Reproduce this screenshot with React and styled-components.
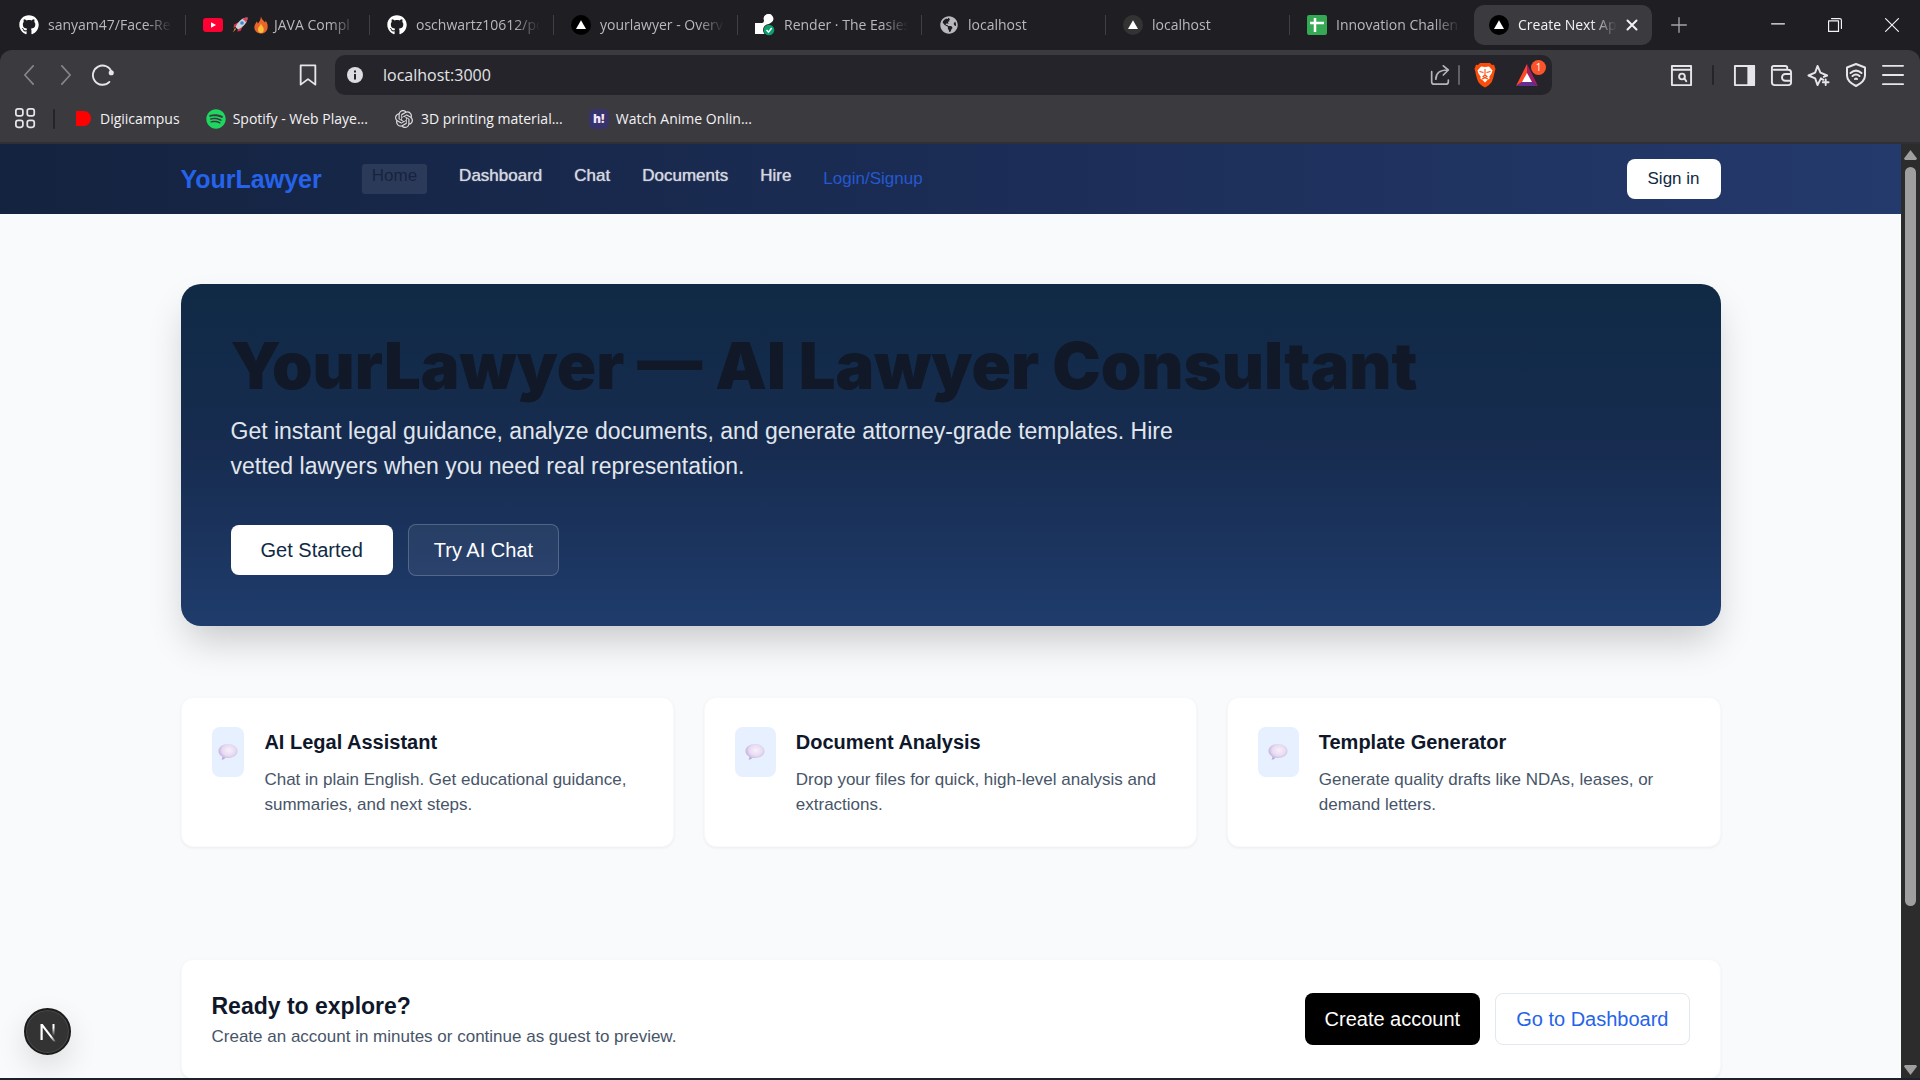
import React, { useState } from 'react';
import styled, { createGlobalStyle, css } from 'styled-components';
import { FaGithub, FaSpotify, FaGlobeAmericas } from 'react-icons/fa';
import { SiOpenai } from 'react-icons/si';

const GlobalStyle = createGlobalStyle`
  * {
    box-sizing: border-box;
  }

  body {
    margin: 0;
    background: #1f1e23;
    font-family: "Liberation Sans", Arial, sans-serif;
  }

  button, input {
    font-family: inherit;
  }

  svg {
    flex: none;
  }
`;

/* ---------- browser window ---------- */

const Window = styled.div`
  display: flex;
  flex-direction: column;
  height: 100vh;
  overflow: hidden;
  border-bottom: 2px solid #1c212b;
`;

const Chrome = styled.header`
  flex: none;
  font-family: "Open Sans", "Noto Sans", sans-serif;
  background: #1f1e23;
`;

const TabStrip = styled.div`
  display: flex;
  align-items: center;
  height: 50px;
  padding-left: 2px;
`;

const Tab = styled.button`
  position: relative;
  flex: 0 1 184px;
  min-width: 0;
  height: 40px;
  display: flex;
  align-items: center;
  gap: 9px;
  padding: 0 14px 0 17px;
  border: none;
  background: transparent;
  color: #b9b9bd;
  font-size: 14px;
  line-height: 20px;
  text-align: left;

  &::after {
    content: '';
    display: ${({ $last }) => ($last ? 'none' : 'block')};
    position: absolute;
    right: 0;
    top: 10px;
    width: 1px;
    height: 20px;
    background: #403f45;
  }

  ${({ $active }) => $active && css`
    flex-basis: 178px;
    padding: 0 14px 0 15px;
    border-radius: 10px;
    background: #3b3a3f;
    color: #f2f2f4;
  `}
`;

const TabTitle = styled.span`
  flex: 1;
  min-width: 0;
  display: flex;
  align-items: center;
  gap: 6px;
  overflow: hidden;
  white-space: nowrap;
  mask-image: linear-gradient(to right, #000 calc(100% - 26px), transparent);
`;

const FixedIcon = styled.span`
  flex: none;
  display: flex;
  align-items: center;
  justify-content: center;
  width: 20px;
  height: 20px;
  color: ${({ $color }) => $color || '#ffffff'};
`;

const NewTab = styled.button`
  display: flex;
  align-items: center;
  justify-content: center;
  width: 40px;
  height: 40px;
  margin: 0 auto 0 7px;
  padding: 0;
  border: none;
  background: transparent;
  color: #a5a5a9;
`;

const WindowButton = styled.button`
  display: flex;
  align-items: center;
  justify-content: center;
  width: 57px;
  height: 50px;
  padding: 0;
  border: none;
  background: transparent;
  color: #f4f4f6;
`;

const Bars = styled.div`
  background: #3b3a3f;
  border-radius: 12px 12px 0 0;
  border-bottom: 2px solid #303034;
`;

const Toolbar = styled.div`
  display: flex;
  align-items: center;
  padding-top: 5px;
`;

const ToolGroup = styled.div`
  flex: none;
  display: flex;
  align-items: center;
  width: ${({ $width }) => $width};
  padding: 0 9px 0 10px;
  justify-content: ${({ $end }) => ($end ? 'flex-end' : 'flex-start')};
`;

const ToolButton = styled.button`
  display: flex;
  align-items: center;
  justify-content: center;
  width: 37px;
  height: 38px;
  padding: 0;
  border: none;
  background: transparent;
  color: ${({ $dim }) => ($dim ? '#85858a' : '#e6e6ea')};
  margin-left: ${({ $push }) => ($push ? 'auto' : '0')};
`;

const Divider = styled.span`
  width: 2px;
  height: 20px;
  margin: 0 ${({ $space }) => $space || '12px'};
  border-radius: 1px;
  background: ${({ $light }) => ($light ? '#606066' : '#252429')};
`;

const AddressBar = styled.div`
  flex: 1;
  display: flex;
  align-items: center;
  height: 40px;
  padding: 0 4px 0 12px;
  border-radius: 10px;
  background: #25242a;
`;

const AddressInput = styled.input`
  flex: 1;
  min-width: 0;
  padding: 0 0 0 20px;
  border: none;
  outline: none;
  background: transparent;
  color: #e4e4e8;
  font-size: 16px;
  line-height: 24px;
`;

const AddressButton = styled.button`
  position: relative;
  display: flex;
  align-items: center;
  justify-content: center;
  width: ${({ $wide }) => ($wide ? '42px' : '28px')};
  height: 40px;
  padding: 0;
  border: none;
  background: transparent;
  color: #b4b4b9;
`;

const Badge = styled.span`
  position: absolute;
  top: 5px;
  right: 2px;
  width: 15px;
  height: 15px;
  border-radius: 8px;
  background: #fb542b;
  color: #fff;
  font-size: 10px;
  line-height: 15px;
  text-align: center;
`;

const Bookmarks = styled.nav`
  display: flex;
  align-items: center;
  gap: 26px;
  height: 47px;
  padding: 0 15px;
`;

const AppsButton = styled.button`
  display: flex;
  align-items: center;
  gap: 17px;
  padding: 0;
  border: none;
  background: transparent;
  color: #e6e6ea;
  margin-right: -8px;
`;

const Bookmark = styled.a`
  display: flex;
  align-items: center;
  gap: 7px;
  color: #f2f2f4;
  font-size: 14px;
  line-height: 20px;
  text-decoration: none;
  white-space: nowrap;
`;

const HTile = styled.span`
  width: 20px;
  height: 20px;
  border-radius: 5px;
  background: #37336b;
  color: #f5e6fa;
  font-size: 12px;
  font-weight: 800;
  line-height: 20px;
  text-align: center;
`;

/* ---------- viewport ---------- */

const Viewport = styled.div`
  flex: 1;
  min-height: 0;
  display: flex;
`;

const Page = styled.div`
  flex: 1;
  min-width: 0;
  overflow: hidden;
  background: #f9fafc;
`;

const Scrollbar = styled.div`
  flex: none;
  width: 19px;
  display: flex;
  flex-direction: column;
  align-items: center;
  padding: 6px 0 3px;
  background: #2c2c2c;
`;

const ScrollTrack = styled.div`
  flex: 1;
  display: flex;
  padding: 7px 0 8px;
`;

const ScrollThumb = styled.div`
  width: 11px;
  height: 83%;
  border-radius: 6px;
  background: #9f9f9f;
`;

const Container = styled.div`
  width: 100%;
  max-width: 1600px;
  margin: 0 auto;
  padding: 0 30px;
`;

const Nav = styled.nav`
  background: linear-gradient(to right, #14233f, #1b2c55 50%, #243a6c);
`;

const NavInner = styled(Container)`
  display: flex;
  align-items: center;
  height: 70px;
`;

const Logo = styled.a`
  margin-right: 40px;
  color: #2563eb;
  font-size: 25px;
  font-weight: 700;
  line-height: 35px;
  text-decoration: none;
`;

const NavLinks = styled.div`
  display: flex;
  align-items: center;
  gap: 32px;
  margin-right: auto;
`;

const NavLink = styled.a`
  height: 30px;
  color: #d3d7df;
  font-size: 17px;
  line-height: 24px;
  text-decoration: none;
  text-shadow: 0 0 1px #d3d7df;

  ${({ $current }) => $current && css`
    padding: 0 10px;
    border-radius: 3px;
    background: #2c3a5a;
    color: #17233f;
    text-shadow: none;
  `}

  ${({ $plain }) => $plain && css`
    line-height: 30px;
    color: #2459cf;
    text-shadow: none;
  `}
`;

const buttonSizes = {
  small: css`
    padding: 8px 21px;
    font-size: 17px;
    line-height: 24px;
  `,
  medium: css`
    padding: 13px 20px;
    font-size: 20px;
    line-height: 26px;
  `,
  large: css`
    padding: 12px 30px;
    font-size: 20px;
    line-height: 26px;
  `,
};

const buttonLooks = {
  white: css`
    background: #ffffff;
    color: #0f2a43;
  `,
  glass: css`
    padding: 12px 25px;
    background: rgba(255, 255, 255, 0.06);
    border: 1px solid rgba(255, 255, 255, 0.2);
    color: #ffffff;
  `,
  black: css`
    background: #000000;
    color: #ffffff;
  `,
  outline: css`
    padding: 12px 20px;
    background: #ffffff;
    border: 1px solid #e2e8f0;
    color: #2563eb;
  `,
};

const Button = styled.button`
  flex: none;
  border: none;
  border-radius: 8px;
  white-space: nowrap;
  ${({ $size }) => buttonSizes[$size]}
  ${({ $look }) => buttonLooks[$look]}
`;

const Main = styled(Container)`
  padding-top: 70px;
`;

const Hero = styled.section`
  padding: 50px;
  border-radius: 20px;
  background: linear-gradient(to bottom, #102a45, #172c50 50%, #1f3c6c);
  box-shadow: 0 20px 38px -6px rgba(0, 0, 0, 0.2);
`;

const HeroTitle = styled.h1`
  margin: 0;
  color: #111827;
  font-family: Inter, "Arial Black", sans-serif;
  font-size: 65px;
  font-weight: 900;
  line-height: 64px;
`;

const HeroText = styled.p`
  max-width: 960px;
  margin: 16px 0 40px;
  color: #e1e6ee;
  font-size: 23px;
  line-height: 35px;
`;

const ButtonRow = styled.div`
  display: flex;
  align-items: center;
  gap: 15px;
`;

const Features = styled.section`
  display: grid;
  grid-template-columns: repeat(3, 1fr);
  gap: 30px;
  margin-top: 71px;
`;

const card = css`
  padding: 29px 30px;
  border: 1px solid #f8f9fb;
  border-radius: 12px;
  background: #ffffff;
  box-shadow: 0 1px 3px rgba(15, 23, 42, 0.06);
`;

const Feature = styled.article`
  ${card}
  display: flex;
  align-items: flex-start;
  gap: 20px;
`;

const FeatureIcon = styled.div`
  display: flex;
  align-items: center;
  justify-content: center;
  width: 50px;
  height: 50px;
  border-radius: 8px;
  background: #e6f0ff;
`;

const FeatureTitle = styled.h3`
  margin: 0 0 10px;
  color: #0f172a;
  font-size: 20px;
  font-weight: 700;
  line-height: 30px;
`;

const Muted = styled.p`
  margin: 0;
  color: #475569;
  font-size: 17px;
  line-height: 25px;
`;

const CallToAction = styled.section`
  ${card}
  display: flex;
  align-items: center;
  justify-content: space-between;
  margin-top: 112px;
`;

const CtaTitle = styled.h2`
  margin: 0;
  color: #0f172a;
  font-size: 23px;
  font-weight: 700;
  line-height: 35px;
`;

const DevBadge = styled.button`
  position: fixed;
  left: 24px;
  bottom: 25px;
  display: flex;
  align-items: center;
  justify-content: center;
  width: 47px;
  height: 47px;
  padding: 0;
  border: 2px solid #1c1c1c;
  border-radius: 50%;
  background: #333333;
  box-shadow: inset 0 0 0 1px #4a4a4a, 0 12px 30px rgba(0, 0, 0, 0.12);
`;

/* ---------- drawings ---------- */

const Stroke = ({ size = 20, width = 2, children }) => (
  <svg width={size} height={size} viewBox="0 0 24 24" fill="none" stroke="currentColor"
    strokeWidth={width} strokeLinecap="round" strokeLinejoin="round">
    {children}
  </svg>
);

const Triangle = ({ fill = '#000' }) => (
  <svg width="20" height="20" viewBox="0 0 20 20">
    <circle cx="10" cy="10" r="10" fill={fill} />
    <path d="M10 5.2 15 14H5z" fill="#fff" />
  </svg>
);

const YouTube = () => (
  <svg width="20" height="20" viewBox="0 0 20 20">
    <rect y="3" width="20" height="14" rx="3" fill="#ff0033" />
    <path d="M8 7.2v5.6l5-2.8z" fill="#fff" />
  </svg>
);

const Rocket = () => (
  <svg width="16" height="16" viewBox="0 0 16 16">
    <path d="M4 12 0.8 15.4 3 11z" fill="#f8a22e" />
    <path d="M6 5.5 2 7.5 1.5 11 6 8.5zM10.5 10 8.5 14 5 14.5 7.5 10z" fill="#d8324c" />
    <path d="M15.5.5C11 .6 6.500 3.500 3.500 10l2.500 2.500C12.500 9.500 15.400 5 15.500.5z" fill="#c9d1dc" />
    <path d="M15.500.5c-1.800 0-3.500.4-5 1.200l3.800 3.800c.8-1.500 1.200-3.200 1.200-5z" fill="#e2405c" />
    <circle cx="10" cy="6" r="1.800" fill="#3d87c9" />
  </svg>
);

const Flame = () => (
  <svg width="14" height="18" viewBox="0 0 14 18">
    <path d="M7 .5c.5 3 3 4 4 6 .5-.6.600-1.200.5-2C13.300 6.700 14 9 13.600 12c-.5 3.500-3.300 5.500-6.600 5.500S.7 15.300.4 12C.1 9 2 7.500 2.500 5.500c.8.600 1.200 1.300 1.400 2C5.500 5.500 6.800 3.500 7 .5z" fill="#e8662a" />
    <path d="M7 7.500c.4 2 2.800 3.200 2.800 6 0 2-1.200 3.500-2.800 3.500s-3-1.500-3-3.500C4 11 6.300 10 7 7.500z" fill="#fbbf3b" />
  </svg>
);

const RenderLogo = () => (
  <svg width="20" height="22" viewBox="0 0 20 22">
    <path d="M0 20V9h6c2 0 3-1 3-2.600A4.800 4.800 0 1 1 16 8.800c-1.200.8-2.500 1-2.500 2.200v9z" fill="#fff" />
    <circle cx="14" cy="16" r="6" fill="#1f1e23" />
    <circle cx="14" cy="16" r="5.300" fill="#0aa06e" />
    <path d="m11.500 16 2 2.200 3.200-4.200" fill="none" stroke="#fff" strokeWidth="1.500" />
  </svg>
);

const Sheets = () => (
  <svg width="20" height="20" viewBox="0 0 20 20">
    <rect width="20" height="20" rx="2" fill="#34a853" />
    <path d="M8 3v14M3 8h14" stroke="#fff" strokeWidth="2.500" fill="none" />
  </svg>
);

const BraveLion = () => (
  <svg width="22" height="26" viewBox="0 0 22 26">
    <path d="M6 1h10l2 2 2-.2L21.500 7l-.8 2.500c-.8 4-1.700 8-3 10.500-1.200 2-4.500 4.500-6.700 5.500-2.200-1-5.500-3.500-6.700-5.500-1.300-2.500-2.200-6.500-3-10.500L.5 7 2 2.800 4 3z" fill="#fb4d0a" />
    <path d="M7 4.500 11 5l4-.5L18.500 8.500l-1 3-2.200 3.300.4 1.700-2.200 1.500L11 20.500 8.500 18l-2.200-1.500.4-1.700-2.200-3.300-1-3z" fill="#fff" />
    <path d="m5.500 9.500 4 1M16.500 9.500l-4 1M11 7v6l-2 1.500 2 1.200 2-1.200-2-1.500M8 17l3-1.300 3 1.300" fill="none" stroke="#fb4d0a" strokeWidth="1.100" />
  </svg>
);

const BatTriangle = () => (
  <svg width="24" height="24" viewBox="0 0 24 24">
    <path d="M12 1 1 23l7-4.500 4-7.500z" fill="#ff4724" />
    <path d="M1 23h22l-6.500-4.500H8z" fill="#662d91" />
    <path d="m12 1 11 22-6.500-4.500L12 11z" fill="#9e1f63" />
    <path d="m12 10 5 9H7z" fill="#fff" />
  </svg>
);

const SpeechBubble = () => (
  <svg width="20" height="20" viewBox="0 0 20 20">
    <defs>
      <radialGradient id="bubble" cx="0.55" cy="0.4" r="0.6">
        <stop offset="0" stopColor="#f7f1fa" />
        <stop offset="0.6" stopColor="#e6daf0" />
        <stop offset="1" stopColor="#bda6dc" />
      </radialGradient>
    </defs>
    <path d="M10 2c5.300 0 9.500 3 9.500 7s-4.200 7-9.500 7c-.9 0-1.700-.1-2.500-.3-.9 1.200-2.200 1.900-4 2.100.7-.9.9-2 .7-3.300C1.900 13.300.5 11.300.5 9c0-4 4.200-7 9.500-7z" fill="url(#bubble)" />
  </svg>
);

const NextMark = () => (
  <svg width="20" height="22" viewBox="0 0 20 22">
    <defs>
      <linearGradient id="stem" x1="0" y1="0" x2="0" y2="1">
        <stop offset="0.3" stopColor="#fff" />
        <stop offset="1" stopColor="#fff" stopOpacity="0" />
      </linearGradient>
      <linearGradient id="slash" x1="0" y1="0" x2="1" y2="1">
        <stop offset="0.7" stopColor="#fff" />
        <stop offset="1" stopColor="#fff" stopOpacity="0.1" />
      </linearGradient>
    </defs>
    <path d="M2.500 19V3h2.200L18 20.500h-2.500L4.700 6.400V19z" fill="url(#slash)" />
    <path d="M14.500 3h2v12h-2z" fill="url(#stem)" />
  </svg>
);

/* ---------- data ---------- */

const tabs = [
  { icon: <FaGithub size={20} />, title: 'sanyam47/Face-Re' },
  { icon: <YouTube />, title: 'JAVA Compl', lead: <><Rocket /><Flame /></> },
  { icon: <FaGithub size={20} />, title: 'oschwartz10612/po' },
  { icon: <Triangle />, title: 'yourlawyer - Overv' },
  { icon: <RenderLogo />, title: 'Render · The Easies' },
  { icon: <FaGlobeAmericas size={18} />, title: 'localhost', color: '#b9b9bd' },
  { icon: <Triangle fill="#333333" />, title: 'localhost' },
  { icon: <Sheets />, title: 'Innovation Challen' },
  { icon: <Triangle />, title: 'Create Next Ap' },
];

const bookmarks = [
  {
    title: 'Digiicampus',
    icon: <svg width="15" height="15" viewBox="0 0 15 15"><path d="M0 0h8a7 7.500 0 0 1 0 15H0z" fill="#ff0000" /></svg>,
  },
  { title: 'Spotify - Web Playe...', icon: <FaSpotify size={20} />, color: '#1ed760' },
  { title: '3D printing material...', icon: <SiOpenai size={18} />, color: '#dcdce0' },
  { title: 'Watch Anime Onlin...', icon: <HTile>h!</HTile> },
];

const features = [
  { title: 'AI Legal Assistant', text: 'Chat in plain English. Get educational guidance, summaries, and next steps.' },
  { title: 'Document Analysis', text: 'Drop your files for quick, high-level analysis and extractions.' },
  { title: 'Template Generator', text: 'Generate quality drafts like NDAs, leases, or demand letters.' },
];

/* ---------- sections ---------- */

function BrowserTabs() {
  const [active, setActive] = useState(tabs.length - 1);

  return (
    <TabStrip>
      {tabs.map((tab, i) => (
        <Tab key={i} $active={i === active} $last={i >= tabs.length - 2} onClick={() => setActive(i)}>
          <FixedIcon $color={tab.color}>{tab.icon}</FixedIcon>
          <TabTitle>{tab.lead}{tab.title}</TabTitle>
          {i === active && (
            <Stroke size={12} width={4}><path d="M3 3l18 18M21 3 3 21" /></Stroke>
          )}
        </Tab>
      ))}
      <NewTab aria-label="New tab"><Stroke size={16}><path d="M12 1v22M1 12h22" /></Stroke></NewTab>
      <WindowButton aria-label="Minimize"><Stroke size={14}><path d="M1 10h22" /></Stroke></WindowButton>
      <WindowButton aria-label="Restore">
        <Stroke size={14}><path d="M1 5h17v18H1zM6 1h14a3 3 0 0 1 3 3v14" /></Stroke>
      </WindowButton>
      <WindowButton aria-label="Close"><Stroke size={14}><path d="M1 1l22 22M23 1 1 23" /></Stroke></WindowButton>
    </TabStrip>
  );
}

function BrowserToolbar() {
  const [url, setUrl] = useState('localhost:3000');

  return (
    <Toolbar>
      <ToolGroup $width="335px">
        <ToolButton $dim aria-label="Back"><Stroke><path d="M17 1 7 12l10 11" /></Stroke></ToolButton>
        <ToolButton $dim aria-label="Forward"><Stroke><path d="m7 1 10 11L7 23" /></Stroke></ToolButton>
        <ToolButton aria-label="Reload">
          <Stroke size={22}><path d="M19 19.500A10.500 10.500 0 1 1 21.500 9" /><circle cx="21" cy="9.500" r="1.800" fill="currentColor" /></Stroke>
        </ToolButton>
        <ToolButton $push aria-label="Bookmark this page">
          <Stroke size={22}><path d="M4 1.500h16V22.500l-8-6-8 6z" /></Stroke>
        </ToolButton>
      </ToolGroup>
      <AddressBar>
        <svg width="16" height="16" viewBox="0 0 16 16">
          <circle cx="8" cy="8" r="8" fill="#dcdce2" />
          <path d="M8 3.500v2M8 7v5.500" stroke="#25242a" strokeWidth="2" />
        </svg>
        <AddressInput aria-label="Address" value={url} onChange={(e) => setUrl(e.target.value)} />
        <AddressButton aria-label="Share">
          <Stroke><path d="M2 8v12a3 3 0 0 0 3 3h14a3 3 0 0 0 3-3v-2M7 17c0-7 4-11 14-11M16 1l6 5-6 6" /></Stroke>
        </AddressButton>
        <Divider $light $space="4px" />
        <AddressButton $wide aria-label="Brave Shields"><BraveLion /></AddressButton>
        <AddressButton $wide aria-label="Brave Rewards"><BatTriangle /><Badge>1</Badge></AddressButton>
      </AddressBar>
      <ToolGroup $width="368px" $end>
        <ToolButton aria-label="Search tabs">
          <Stroke size={23}><path d="M2 2h20v20H2zM2 6h20" /><circle cx="12.500" cy="13" r="3" /><path d="m15 15 2 3" /></Stroke>
        </ToolButton>
        <Divider />
        <ToolButton aria-label="Sidebar">
          <Stroke size={23}><path d="M2 2h20v20H2z" /><path d="M16 2h6v20h-6z" fill="currentColor" /></Stroke>
        </ToolButton>
        <ToolButton aria-label="Wallet">
          <Stroke size={23}><path d="M18 6V4a2 2 0 0 0-2-2H4a2 2 0 0 0-2 2v15a3 3 0 0 0 3 3h14a3 3 0 0 0 3-3V9a3 3 0 0 0-3-3H4M22 10.500h-6a3 3 0 0 0 0 7h6" /></Stroke>
        </ToolButton>
        <ToolButton aria-label="Leo AI">
          <Stroke size={23}><path d="M17 16.500 14.500 15 11 22l-2.500-7L1.500 12l7-3L11 2l3 7 7 3-3.500 1.500M19.500 16v6M16.500 19h6" /></Stroke>
        </ToolButton>
        <ToolButton aria-label="VPN">
          <Stroke size={24}><path d="m12 1 9 3.500v8c0 5-4 8-9 10.500-5-2.500-9-5.500-9-10.500v-8z" /><path d="M6.500 10c3.500-3 7.500-3 11 0M8.500 13c2.300-2 4.700-2 7 0M11 16c.6-.5 1.400-.5 2 0" /></Stroke>
        </ToolButton>
        <ToolButton aria-label="Menu">
          <Stroke size={22}><path d="M1 2h22M1 12h22M1 22h22" /></Stroke>
        </ToolButton>
      </ToolGroup>
    </Toolbar>
  );
}

function BookmarksBar() {
  return (
    <Bookmarks aria-label="Bookmarks">
      <AppsButton aria-label="All bookmarks">
        <Stroke size={21}>
          <rect x="1" y="1" width="8" height="8" rx="2.500" /><rect x="14" y="1" width="8" height="8" rx="2.500" />
          <rect x="1" y="14" width="8" height="8" rx="2.500" /><rect x="14" y="14" width="8" height="8" rx="2.500" />
        </Stroke>
        <Divider $space="0" />
      </AppsButton>
      {bookmarks.map((item) => (
        <Bookmark key={item.title} href="#">
          <FixedIcon $color={item.color}>{item.icon}</FixedIcon>
          {item.title}
        </Bookmark>
      ))}
    </Bookmarks>
  );
}

function SiteNav() {
  return (
    <Nav>
      <NavInner>
        <Logo href="#">YourLawyer</Logo>
        <NavLinks>
          <NavLink href="#" $current>Home</NavLink>
          <NavLink href="#">Dashboard</NavLink>
          <NavLink href="#">Chat</NavLink>
          <NavLink href="#">Documents</NavLink>
          <NavLink href="#">Hire</NavLink>
          <NavLink href="#" $plain>Login/Signup</NavLink>
        </NavLinks>
        <Button $size="small" $look="white">Sign in</Button>
      </NavInner>
    </Nav>
  );
}

function App() {
  return (
    <Window>
      <GlobalStyle />
      <Chrome>
        <BrowserTabs />
        <Bars>
          <BrowserToolbar />
          <BookmarksBar />
        </Bars>
      </Chrome>
      <Viewport>
        <Page>
          <SiteNav />
          <Main as="main">
            <Hero>
              <HeroTitle>YourLawyer — AI Lawyer Consultant</HeroTitle>
              <HeroText>
                Get instant legal guidance, analyze documents, and generate attorney-grade templates. Hire
                vetted lawyers when you need real representation.
              </HeroText>
              <ButtonRow>
                <Button $size="large" $look="white">Get Started</Button>
                <Button $size="large" $look="glass">Try AI Chat</Button>
              </ButtonRow>
            </Hero>
            <Features>
              {features.map((feature) => (
                <Feature key={feature.title}>
                  <FeatureIcon><SpeechBubble /></FeatureIcon>
                  <div>
                    <FeatureTitle>{feature.title}</FeatureTitle>
                    <Muted>{feature.text}</Muted>
                  </div>
                </Feature>
              ))}
            </Features>
            <CallToAction>
              <div>
                <CtaTitle>Ready to explore?</CtaTitle>
                <Muted>Create an account in minutes or continue as guest to preview.</Muted>
              </div>
              <ButtonRow>
                <Button $size="medium" $look="black">Create account</Button>
                <Button $size="medium" $look="outline">Go to Dashboard</Button>
              </ButtonRow>
            </CallToAction>
          </Main>
        </Page>
        <Scrollbar>
          <svg width="13" height="10" viewBox="0 0 13 10"><path d="M6.500 0 13 8.500 12 10H1L0 8.500z" fill="#9f9f9f" /></svg>
          <ScrollTrack><ScrollThumb /></ScrollTrack>
          <svg width="13" height="10" viewBox="0 0 13 10"><path d="M6.500 10 13 1.500 12 0H1L0 1.500z" fill="#9f9f9f" /></svg>
        </Scrollbar>
      </Viewport>
      <DevBadge aria-label="Open Next.js Dev Tools"><NextMark /></DevBadge>
    </Window>
  );
}

export default App;
